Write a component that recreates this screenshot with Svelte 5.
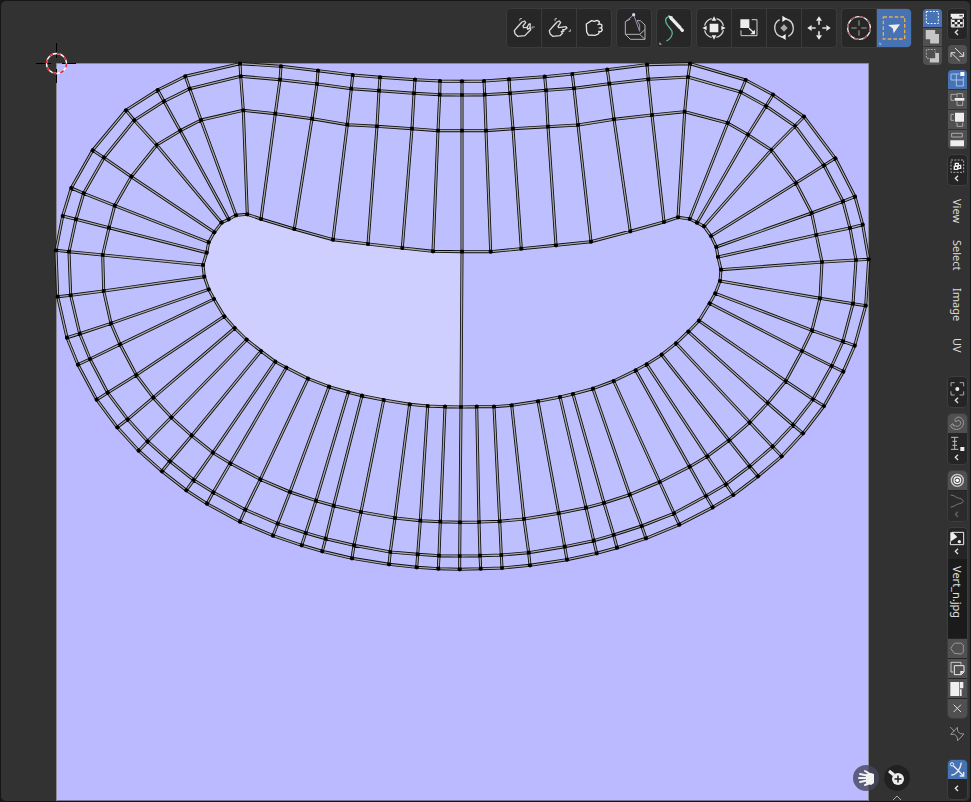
<script>
    // each spoke runs from the outer ring to the inner ring: x1 y1 x2 y2 x3 y3 x4 y4
    const spokes = [
        [56, 250.3, 69, 251.7, 102.7, 255, 203, 265],
        [62.7, 216, 76, 219.3, 109, 227.7, 206.7, 252.7],
        [71.3, 188, 83.7, 193.3, 114.7, 205.7, 208.7, 242.3],
        [92.7, 150.3, 104, 157.7, 131.3, 176.7, 214.3, 232.3],
        [126, 110.3, 134.3, 120.3, 156.7, 145, 221.7, 222.7],
        [157.7, 90, 164, 101.3, 180.3, 130.7, 228.7, 219.3],
        [185.3, 76.3, 189.7, 88.7, 201, 120, 236, 215.3],
        [240, 63.7, 240.7, 76.3, 243.3, 110.3, 247.3, 214.3],
        [281, 66.3, 280, 79.7, 275.3, 113.7, 261, 219],
        [318, 70.7, 317, 84, 312, 118.7, 294.3, 229],
        [352.7, 75, 351.3, 88.7, 347.3, 124.7, 333, 239.7],
        [380, 77.3, 379, 90.7, 377, 126.3, 368, 244],
        [415, 79.7, 414, 93.3, 412, 128.7, 402.3, 248],
        [440, 81, 439.7, 94.7, 438, 130.7, 433, 251.3],
        [462, 81.3, 462, 95, 462, 130.7, 462, 251.7],
        [484, 81, 484.7, 94.7, 486, 130.7, 490.7, 251.7],
        [509, 79.3, 510, 93.3, 513, 128.7, 521.3, 248.7],
        [544.7, 76.7, 546, 90.3, 548, 126.7, 556, 245.3],
        [572.3, 74, 574, 88.3, 578, 125, 591, 241.7],
        [607.3, 69.7, 609.3, 83.7, 614, 119.3, 630.3, 231.3],
        [647, 64.7, 648.3, 79.3, 652, 115, 664, 222],
        [690, 63.7, 688, 77, 684.7, 111.7, 678, 217.3],
        [745.7, 80, 740.7, 92, 727.7, 123, 689.7, 219],
        [773, 94.7, 766, 106, 748, 134.7, 697, 222.7],
        [804, 116.7, 795, 126, 771.3, 150, 704, 226.3],
        [835.3, 158.3, 824, 165.3, 796, 183, 711, 236],
        [855, 196.7, 843, 201.3, 811.7, 213, 716.3, 247],
        [862.7, 224.7, 850, 228, 816.3, 235, 718, 257],
        [868.7, 259.3, 856, 260, 822, 262, 721, 269.7],
        [865.7, 305.7, 853, 303.7, 820, 298.3, 720, 281],
        [854.7, 345.7, 843, 341.3, 812, 330.3, 715.3, 293.3],
        [843.3, 371.7, 831.7, 366, 802, 351, 709.7, 303.3],
        [824, 406, 813, 399.3, 785.7, 381, 699, 320.7],
        [803, 433.3, 793, 425, 767.7, 403, 688.3, 331.7],
        [781.7, 456.3, 772.7, 446.7, 749.7, 422.3, 676, 343.3],
        [758, 476.3, 749.7, 466.3, 729, 440.3, 661.7, 354.7],
        [733.3, 495, 726, 484.3, 707.3, 456.3, 646.7, 364.3],
        [712.7, 507.3, 706, 496, 689.7, 466.7, 635.7, 370.3],
        [679.3, 524.7, 674, 513.3, 659.7, 482, 613.7, 381],
        [646, 538.3, 641.7, 526, 629.7, 494.7, 593, 388.7],
        [617, 547.7, 613.7, 535, 604, 503, 573, 394],
        [596.7, 553.3, 593.7, 540.7, 586, 507.7, 560, 397],
        [567, 559.7, 564.7, 546.7, 558.7, 513.3, 538, 401.3],
        [530, 565.3, 528.7, 552.7, 524, 519, 511.7, 405.3],
        [502, 568, 501.3, 555, 499.7, 521.3, 494, 406.7],
        [480.7, 568.7, 480, 555.7, 479, 522, 476.7, 406.7],
        [459.7, 569.3, 459.7, 556, 460, 522.3, 461, 407],
        [438.3, 568.7, 439, 555.7, 440.3, 521.7, 445, 406.7],
        [416.7, 567.3, 417.7, 554.3, 420.3, 520.7, 427.7, 406],
        [389, 564.3, 390.3, 552, 395, 518, 409.7, 404.3],
        [352, 558.3, 354, 545.3, 361, 512, 383.7, 400],
        [322.3, 551.3, 325.7, 538.7, 333.7, 505.7, 362, 395.7],
        [301.7, 545.3, 305.7, 533, 316, 500.7, 348.3, 392.3],
        [273, 535.7, 277.7, 523.7, 290, 492, 329, 386.7],
        [240, 521.7, 245.3, 509.7, 260.3, 479.3, 308, 378.7],
        [207, 503.7, 213.3, 492.3, 230.3, 463.3, 286.3, 367.7],
        [186.3, 490.3, 193.7, 480, 213, 452.7, 275.3, 361.7],
        [162, 471.3, 170, 461.3, 191.7, 435.7, 261, 351],
        [138.7, 450.7, 147.7, 441.3, 171.3, 417.3, 246.7, 339.7],
        [117.3, 427.3, 127.7, 419.3, 153.3, 397.7, 234.7, 328],
        [96.7, 399.7, 107.7, 392.7, 136.3, 375, 224.3, 316.3],
        [78, 364.7, 90, 359, 120, 344.3, 214, 299],
        [67, 337.7, 79.7, 333.7, 111, 323.3, 208.7, 289.3],
        [57.7, 296.7, 70.7, 295.3, 103.7, 291, 204.3, 276.7]
    ];

    const TOP = 14;
    const BOTTOM = 46;

    function path(points) {
        return "M" + points.map((p) => p.join(" ")).join("L");
    }

    const ring = (n) => spokes.map((s) => [s[n * 2], s[n * 2 + 1]]);
    const inner = ring(3);
    const verts = [0, 1, 2, 3].flatMap(ring);

    const wire =
        [0, 1, 2, 3].map((n) => path(ring(n)) + "Z").join("") +
        spokes.map((s) => `M${s[0]} ${s[1]}L${s[2]} ${s[3]}L${s[4]} ${s[5]}L${s[6]} ${s[7]}`).join("") +
        path([inner[TOP], inner[BOTTOM]]);

    const hull = path(ring(0)) + "Z";
    const activeFace = path([...inner.slice(0, TOP + 1), ...inner.slice(BOTTOM)]) + "Z";

    // toolbar icons, drawn on a 102 x 114 grid
    const toolIcons = {
        grab: `<g fill="none" stroke="#d8d8d8" stroke-width="4" stroke-linejoin="round"><path d="M22 65L34 51 45 39 53 36 56 41 48 51 50 56 60 55 66 45 70 45 69 55 71 62 62 71 54 80 32 82 24 74Z"/><path d="M60 55L62 61 70 56"/><path stroke="#b5b5b5" stroke-width="3" d="M38 35L39 29 45 29M75 59L75 54 83 54"/></g>`,
        relax: `<g fill="none" stroke="#d8d8d8" stroke-width="4" stroke-linejoin="round"><path d="M22 65L34 51 45 39 52 36 56 41 48 52 50 56 72 53 75 57 70 61 62 62 66 66 58 68 62 72 54 80 32 82 24 74Z"/><path stroke="#b5b5b5" stroke-width="3" d="M39 36L39 29 45 29M80 67L85 67 85 61"/></g>`,
        pinch: `<path fill="none" stroke="#e4e4e4" stroke-width="4" stroke-linejoin="round" d="M28 45L44 35 52 37 60 34 67 38 66 44 74 47 75 53 72 56 76 62 73 67 67 69 64 75 54 79 34 78 29 68Z"/><path fill="none" stroke="#e4e4e4" stroke-width="3" d="M61 47L68 46M65 57L74 57M63 67L69 67"/>`,
        rip: `<g fill="none" stroke="#b4b4b4" stroke-width="3"><path d="M25 38L25 76 40 91 84 91 84 48 70 35 60 35M25 76L68 76 84 91M68 76L84 62M40 30L25 38"/><path stroke="#9e89b4" stroke-width="3" d="M50 18L25 38M50 18L68 67 68 48 60 35"/></g><circle cx="50" cy="17" r="5" fill="#dcc9ee"/>`,
        annotate: `<path fill="none" stroke="#56b294" stroke-width="4" d="M37 22C22 26 24 38 32 49C42 61 52 70 42 84C38 91 33 94 28 96"/><path stroke="#ececec" stroke-width="10" stroke-linecap="round" d="M43 28L69 56M74 62L76 64"/><path fill="#eee" d="M34 19L48 23 39 32Z"/><path fill="#aaa" d="M7 99L7 107 15 107Z"/>`,
        transform: `<circle cx="51" cy="57" r="29" fill="none" stroke="#cfcfcf" stroke-width="4" stroke-dasharray="31 14.5" stroke-dashoffset="-7"/><path fill="#ededed" d="M38 44H64V70H38ZM51 22L58 35H44ZM51 92L58 79H44ZM16 57L29 50V64ZM86 57L73 50V64Z"/>`,
        scale: `<path fill="#ececec" d="M25 31H52V57H25Z"/><path fill="none" stroke="#d0d0d0" stroke-width="3" d="M59 32H75V80H27V64"/><path stroke="#eee" stroke-width="4" d="M51 58L64 70"/><path fill="#eee" d="M69 62V76H55Z"/>`,
        rotate: `<path fill="none" stroke="#d8d8d8" stroke-width="4" d="M45 84A28 28 0 0 1 38 32M57 30A28 28 0 0 1 64 82"/><path fill="#a8a8a8" d="M51 46L62 57 51 68 40 57Z"/><path fill="#eee" d="M46 20L60 29 46 39ZM56 75L42 84 56 93Z"/>`,
        move: `<path fill="#ececec" d="M51 22L60 35H42ZM51 92L60 79H42ZM16 57L29 48V66ZM86 57L73 48V66Z"/><path stroke="#e0e0e0" stroke-width="5" d="M51 35V47M51 67V79M29 57H41M61 57H73"/>`,
        cursor: `<circle cx="51" cy="57" r="34" fill="none" stroke="#eee" stroke-width="4"/><circle cx="51" cy="57" r="34" fill="none" stroke="#a94d58" stroke-width="4" stroke-dasharray="13.35 13.35"/><path stroke="#a0a0a0" stroke-width="3" d="M51 34V50M51 64V80M28 57H44M58 57H74"/>`,
        select: `<rect x="19" y="24" width="64" height="66" fill="none" stroke="#e8ae50" stroke-width="4" stroke-dasharray="11 6"/><path fill="#eee" d="M33 48L69 46 50 73 47 58Z"/><path fill="#9ab4dc" d="M7 99L7 107 15 107Z"/>`
    };

    // header icons, drawn on a 57 x 57 grid
    const icons = {
        editor: `<path fill="#eee" d="M8 14H48V25H44V29H12V25H8ZM12 32H20V39H12ZM28 32H36V39H28ZM20 39H28V46H20ZM36 39H44V46H36ZM12 46H20V53H12ZM28 46H36V53H28Z"/><path fill="none" stroke="#eee" stroke-width="3" d="M10 30V54H46V30"/><path fill="#222" d="M34 19H44V22H34Z"/>`,
        sync: `<path fill="none" stroke="#dedede" stroke-width="3" d="M21 9L47 34M47 21V34H34M35 48L9 23M9 36V23H22"/>`,
        vertex: `<path fill="none" stroke="#a6c2ee" stroke-width="3" d="M34 12H9V30H46V22M25 12V48H46V30"/><path fill="#fff" d="M37 6H49V18H37Z"/>`,
        edge: `<path fill="none" stroke="#aaa" stroke-width="3" d="M26 13H9V31H18M27 22V11H44V22M27 34V46H44V34"/><path fill="#eee" d="M20 24H49V32H20Z"/>`,
        face: `<path fill="none" stroke="#aaa" stroke-width="3" d="M18 13H9V31H18M27 38V49H44V38"/><path fill="#eee" d="M21 8H48V35H21Z"/>`,
        island: `<path fill="none" stroke="#aaa" stroke-width="3" d="M11 10H43V21H11Z"/><path fill="#eee" d="M7 31H48V49H7Z"/>`,
        sticky: `<rect x="9" y="15" width="38" height="37" fill="none" stroke="#aaa" stroke-width="3" stroke-dasharray="6 4"/><path fill="none" stroke="#eee" stroke-width="4" d="M22 25H31V33H22ZM19 34H29V43H19ZM31 31H38V40H30"/>`,
        pivot: `<path fill="none" stroke="#aaa" stroke-width="3" d="M20 17H9V28M35 17H47V28M20 54H9V43M35 54H47V43"/><circle cx="28" cy="36" r="6" fill="#eee"/>`,
        magnet: `<path fill="none" stroke="#9b9b9b" stroke-width="3" stroke-linejoin="round" d="M20 17L27 10C38 6 49 18 46 30C42 47 23 51 11 41L7 35 14 29 20 35C27 39 36 36 38 29C39 22 34 18 28 19L24 24ZM12 31L19 38"/>`,
        increment: `<path fill="none" stroke="#bbb" stroke-width="3" d="M9 10H31M9 46H31M20 10V46M13 22H27M13 34H27"/><path fill="#eee" d="M37 39H49V51H37Z"/>`,
        proportional: `<g fill="none" stroke="#eee"><circle cx="28" cy="28" r="18" stroke="#ccc" stroke-width="4"/><circle cx="28" cy="28" r="10" stroke-width="4"/></g><circle cx="28" cy="28" r="5" fill="#fff"/>`,
        falloff: `<path fill="none" stroke="#777" stroke-width="3" d="M8 12C20 12 22 20 34 22C49 25 49 36 34 38C22 40 20 48 8 48"/>`,
        image: `<path fill="none" stroke="#eee" stroke-width="3" d="M12 13H47V50H7V40"/><path fill="#eee" d="M7 13H14L28 27 7 41Z"/><circle cx="34" cy="41" r="5" fill="#eee"/>`,
        shield: `<path fill="none" stroke="#999" stroke-width="3" stroke-linejoin="round" d="M8 28L19 13 39 12 46 18V40L39 45 19 43Z"/>`,
        duplicate: `<path fill="none" stroke="#ccc" stroke-width="3" d="M16 39H9V10H39V17"/><path fill="none" stroke="#eee" stroke-width="3" d="M19 20H48V39L40 47H19Z"/><path fill="#eee" d="M37 48V36H48Z"/>`,
        open: `<path fill="#eee" d="M7 9H34V51H7ZM36 9H46V28H36ZM36 31H41V51H36Z"/>`,
        close: `<path fill="none" stroke="#ddd" stroke-width="3" d="M17 17L39 39M39 17L17 39"/>`,
        pin: `<path fill="none" stroke="#999" stroke-width="3" stroke-linejoin="round" d="M7 9L19 22M28 10L29 22 37 29 48 30 29 50 27 38 20 31 8 31Z"/>`,
        gizmo: `<path fill="none" stroke="#eee" stroke-width="4" d="M16 17L47 48M10 45C23 45 37 30 40 8M47 36V48H35"/><circle cx="12" cy="13" r="5" fill="none" stroke="#eee" stroke-width="3"/>`,
        modeSet: `<rect x="9" y="8" width="38" height="38" fill="none" stroke="#fff" stroke-width="3" stroke-dasharray="6 4.5"/>`,
        modeExtend: `<path fill="#c6c6c6" d="M7 6H37V19H49V49H21V36H7Z"/>`,
        modeSubtract: `<path fill="none" stroke="#b0b0b0" stroke-width="3" stroke-dasharray="6 4" d="M17 36H9V8H37V18"/><path fill="#c6c6c6" d="M37 19H49V49H20V36H37Z"/>`
    };

    const toolGroups = [
        [["grab", "Grab"], ["relax", "Relax"], ["pinch", "Pinch"]],
        [["rip", "Rip Region"]],
        [["annotate", "Annotate"]],
        [["transform", "Transform"], ["scale", "Scale"], ["rotate", "Rotate"], ["move", "Move"]],
        [["cursor", "Cursor"], ["select", "Select Box"]]
    ];

    const modes = [["modeSet", "Set"], ["modeExtend", "Extend"], ["modeSubtract", "Subtract"]];
    const selectModes = [["vertex", "Vertex"], ["edge", "Edge"], ["face", "Face"], ["island", "Island"]];
    const menus = ["View", "Select", "Image", "UV"];
    const imageActions = [["shield", "Fake User"], ["duplicate", "New Image"], ["open", "Open Image"], ["close", "Unlink"]];

    let activeTool = $state("select");
    let activeMode = $state("modeSet");
    let activeSelect = $state("vertex");
    let imageName = $state("Vert_n.jpg");
</script>

{#snippet icon(name)}
    <svg class="icon" viewBox="0 0 57 57" aria-hidden="true">{@html icons[name]}</svg>
{/snippet}

{#snippet chevron()}
    <svg class="chevron" viewBox="0 0 57 33" aria-hidden="true"><path d="M30 5L22 13 30 21" /></svg>
{/snippet}

<div class="editor">
    <svg class="canvas" viewBox="0 0 971 802" preserveAspectRatio="xMinYMin meet" aria-label="UV layout">
        <rect x="56.5" y="63.5" width="812" height="737" fill="#bbb9ff" />
        <path d={hull} fill="#bebfff" />
        <path d={activeFace} fill="#cfcfff" />
        <path d="M56.5 801V63.5H868.5V801" fill="none" stroke="#8a8a93" />
        <path d={wire} fill="none" stroke="#0c0c0c" stroke-width="3" stroke-linejoin="round" />
        <path d={wire} fill="none" stroke="#a8a8aa" stroke-width="1.3" />
        {#each verts as [x, y]}
            <circle cx={x} cy={y} r="2.1" />
        {/each}
        <g fill="none">
            <path d="M36 63.5H51M62 63.5H76M56.5 43V58M56.5 69V83" stroke="#000" />
            <circle cx="56.5" cy="63.5" r="10" stroke="#fff" stroke-width="1.3" />
            <circle cx="56.5" cy="63.5" r="10" stroke="#e0232e" stroke-width="1.5" stroke-dasharray="3.93 3.93" />
        </g>
    </svg>

    <main class="viewport">
        <div class="tools">
            {#each toolGroups as group}
                <div class="tool-group">
                    {#each group as [name, label]}
                        <button class="tool" class:active={activeTool == name} aria-label={label} onclick={() => (activeTool = name)}>
                            <svg viewBox="0 0 102 114" aria-hidden="true">{@html toolIcons[name]}</svg>
                        </button>
                    {/each}
                </div>
            {/each}
        </div>

        <div class="gizmos">
            <button class="gizmo pan" aria-label="Move view">
                <svg viewBox="0 0 26 26" aria-hidden="true">
                    <path fill="none" stroke="#f2f2f2" stroke-width="2" stroke-linecap="round" d="M17 9L12 6M16 11L7 9M16 13H6M16 15L7 17M17 18L12 20" />
                    <path fill="#f2f2f2" d="M13 9L18 8 21 9V18L18 20 13 18Z" />
                </svg>
            </button>
            <button class="gizmo" aria-label="Zoom view">
                <svg viewBox="0 0 26 26" aria-hidden="true">
                    <path stroke="#eee" stroke-width="3" d="M5 6L10 10" />
                    <circle cx="14" cy="14" r="6" fill="#eee" />
                    <path stroke="#222" stroke-width="1.5" d="M14 10.500V17.500M10.500 14H17.500" />
                </svg>
            </button>
            <svg class="region-toggle" viewBox="0 0 10 6" aria-hidden="true"><path d="M1 5L5 1 9 5" /></svg>
        </div>
    </main>

    <div class="modes">
        {#each modes as [name, label]}
            <button class="cell light" class:active={activeMode == name} aria-label={label} onclick={() => (activeMode = name)}>
                {@render icon(name)}
            </button>
        {/each}
    </div>

    <header class="header">
        <button class="cell boxed" aria-label="Editor type">{@render icon("editor")}{@render chevron()}</button>
        <button class="cell light single" aria-label="UV sync selection">{@render icon("sync")}</button>

        <div class="stack">
            {#each selectModes as [name, label]}
                <button class="cell light" class:active={activeSelect == name} aria-label={label} onclick={() => (activeSelect = name)}>
                    {@render icon(name)}
                </button>
            {/each}
        </div>

        <button class="cell boxed" aria-label="Sticky selection">{@render icon("sticky")}{@render chevron()}</button>

        <nav class="menus">
            {#each menus as menu}
                <button class="menu">{menu}</button>
            {/each}
        </nav>

        <button class="cell boxed" aria-label="Pivot point">{@render icon("pivot")}{@render chevron()}</button>

        <div class="stack boxed">
            <button class="cell light" aria-label="Snap">{@render icon("magnet")}</button>
            <button class="cell" aria-label="Snap to">{@render icon("increment")}{@render chevron()}</button>
        </div>

        <div class="stack boxed">
            <button class="cell light" aria-label="Proportional editing">{@render icon("proportional")}</button>
            <button class="cell faded" aria-label="Falloff">{@render icon("falloff")}{@render chevron()}</button>
        </div>

        <div class="stack boxed">
            <button class="cell" aria-label="Browse image">{@render icon("image")}{@render chevron()}</button>
            <input class="name" aria-label="Image name" bind:value={imageName} />
            {#each imageActions as [name, label]}
                <button class="cell light" aria-label={label}>{@render icon(name)}</button>
            {/each}
        </div>

        <button class="cell plain" aria-label="Pin">{@render icon("pin")}</button>

        <div class="stack boxed last">
            <button class="cell active" aria-label="Show gizmo">{@render icon("gizmo")}</button>
            <button class="cell" aria-label="Gizmo options">{@render chevron()}</button>
        </div>
    </header>
</div>

<style>
    :global(body)
    {
        background: #181818;
    }

    .editor
    {
        position: relative;
        display: flex;
        box-sizing: border-box;
        min-height: 100vh;
        overflow: hidden;
        background: #323232;
        border: 1px solid #161616;
        border-radius: 6px;
        font-family: "Noto Sans", sans-serif;
        font-size: 11px;
        color: #dcdcdc;
    }

    /* the drawing starts at the window corner, under the editor's border */
    .canvas
    {
        position: absolute;
        top: -1px;
        left: -1px;
        width: 100vw;
        height: 100vh;
    }

    button, input
    {
        display: flex;
        margin: 0;
        padding: 0;
        border: 0;
        background: none;
        color: inherit;
        font: inherit;
    }

    svg
    {
        display: block;
    }

    .viewport, .modes, .header
    {
        position: relative;
        display: flex;
        flex-direction: column;
        box-sizing: border-box;
        padding-top: 8px;
    }

    .viewport
    {
        flex: 1;
        justify-content: space-between;
    }

    .tools
    {
        display: flex;
        justify-content: flex-end;
        gap: 6px;
    }

    .tool-group
    {
        display: flex;
        gap: 1px;
        border-radius: 4px;
        overflow: hidden;
        background: #3a3a3a;
        box-shadow: 0 0 0 1px #3b3b3b;
    }

    .tool
    {
        width: 34px;
        height: 38px;
        background: #272727;
    }

    .tool.active, .cell.active
    {
        background: #4772b3;
    }

    .gizmos
    {
        position: relative;
        display: flex;
        justify-content: flex-end;
        gap: 5px;
        padding: 0 1px 10px 0;
    }

    .gizmo
    {
        width: 26px;
        height: 26px;
        border-radius: 50%;
        background: #212121;
    }

    .gizmo.pan
    {
        background: rgba(70, 70, 95, 0.8);
    }

    .gizmo svg
    {
        width: 26px;
    }

    .region-toggle
    {
        position: absolute;
        right: 9px;
        bottom: 0;
        width: 10px;
        fill: none;
        stroke: #aaa;
    }

    .modes
    {
        gap: 1px;
        width: 19px;
        margin-left: 12px;
    }

    .header
    {
        gap: 6px;
        width: 19px;
        margin-left: 6px;
        margin-right: 3px;
    }

    .stack
    {
        display: flex;
        flex-direction: column;
        gap: 1px;
        border-radius: 4px;
        overflow: hidden;
    }

    .stack.boxed
    {
        margin-top: 1px;
    }

    .modes .cell:first-child
    {
        border-radius: 4px 4px 0 0;
    }

    .modes .cell:last-child
    {
        border-radius: 0 0 4px 4px;
    }

    .cell
    {
        flex-direction: column;
        width: 19px;
    }

    .modes .cell
    {
        height: 18px;
    }

    .light
    {
        background: #505050;
    }

    .boxed
    {
        border-radius: 4px;
        background: #252525;
        box-shadow: 0 0 0 1px #3d3d3d;
    }

    .single
    {
        border-radius: 4px;
    }

    .faded
    {
        background: #2b2b2b;
    }

    .faded .chevron
    {
        opacity: 0.3;
    }

    .icon
    {
        width: 19px;
        height: 19px;
    }

    .chevron
    {
        width: 19px;
        height: 11px;
        fill: none;
        stroke: #e0e0e0;
        stroke-width: 4px;
    }

    .menus
    {
        display: flex;
        flex-direction: column;
        gap: 17px;
        padding: 8px 0 19px;
    }

    .menu
    {
        writing-mode: vertical-rl;
        width: 19px;
        line-height: 19px;
    }

    .name
    {
        writing-mode: vertical-rl;
        width: 19px;
        height: 79px;
        padding-top: 7px;
        box-sizing: border-box;
        line-height: 19px;
        background: #1b1b1b;
        color: #e4e4e4;
    }

    .plain
    {
        padding: 0 0 10px;
    }

    .last .cell:last-child
    {
        padding: 4px 0;
    }
</style>
